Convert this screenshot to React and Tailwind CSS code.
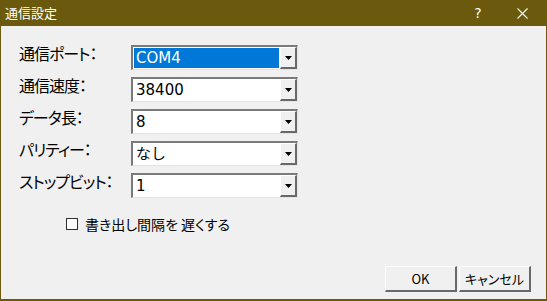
import React from 'react';

const FIELDS = [
  { label: '通信ポート：', value: 'COM4', selected: true },
  { label: '通信速度：', value: '38400' },
  { label: 'データ長：', value: '8' },
  { label: 'パリティー：', value: 'なし' },
  { label: 'ストップビット：', value: '1' },
];

const jp = { fontFamily: '"Noto Sans CJK JP", "Noto Sans", sans-serif' };

function ComboBox({ value, selected }) {
  return (
    <div className="w-[167px] h-[25px] flex border-t-2 border-l-2 border-b border-r border-t-[#7a7a7a] border-l-[#7a7a7a] border-b-[#e3e3e3] border-r-[#e3e3e3] bg-white">
      <div className="flex-1 p-[1px] flex">
        <div
          className={`flex-1 flex items-center pl-[2px] text-[15px] leading-none ${
            selected ? 'bg-[#0078d7] text-white' : 'text-black'
          }`}
          style={{ fontFamily: '"DejaVu Sans", "Noto Sans CJK JP", sans-serif' }}
        >
          {value}
        </div>
      </div>
      <div className="w-[17px] h-full flex items-center justify-center bg-[#f0f0f0] border-t border-l border-t-white border-l-white border-b-2 border-r-2 border-b-[#696969] border-r-[#696969]">
        <svg width="7" height="4" viewBox="0 0 7 4">
          <path d="M0 0h7L3.5 4z" fill="#000" />
        </svg>
      </div>
    </div>
  );
}

export default function App() {
  return (
    <div className="w-[547px] h-[301px] flex flex-col bg-[#6b5a0d] p-[1px] pt-0 select-none">
      <div className="h-[26px] flex items-center text-white text-[13px] shrink-0" style={jp}>
        <span className="pl-[4px] flex-1">通信設定</span>
        <span className="w-[20px] text-[14px] mr-[29px] text-center" style={{ fontFamily: '"DejaVu Sans", sans-serif' }}>?</span>
        <svg width="11" height="11" viewBox="0 0 11 11" className="mr-[18px]">
          <path d="M0.5 0.5l10 10M10.5 0.5l-10 10" stroke="#fff" strokeWidth="1.1" />
        </svg>
      </div>
      <div className="flex-1 bg-[#f0f0f0] mb-[1px] flex flex-col" style={jp}>
        <div className="flex flex-col gap-[7px] pt-[19px]">
          {FIELDS.map((f) => (
            <div key={f.label} className="flex items-start h-[25px]">
              <div className="w-[130px] pl-[18px] text-[16px] leading-[16px] text-black whitespace-nowrap tracking-[-1px] [font-feature-settings:'palt']">
                {f.label}
              </div>
              <ComboBox value={f.value} selected={f.selected} />
            </div>
          ))}
        </div>
        <div className="flex items-center mt-[19px] pl-[65px] gap-[7px]">
          <div className="w-[12px] h-[12px] border border-[#333] bg-white" />
          <span className="text-[14px] leading-none text-black [font-feature-settings:'palt']">書き出し間隔を 遅くする</span>
        </div>
        <div className="flex-1" />
        <div className="flex justify-end gap-[2px] pr-[15px] pb-[7px]">
          {['OK', 'キャンセル'].map((t) => (
            <button
              key={t}
              className="w-[72px] h-[26px] bg-[#f0f0f0] text-[13px] text-black border-t border-l border-t-white border-l-white border-b-2 border-r-2 border-b-[#696969] border-r-[#696969] flex items-center justify-center [font-feature-settings:'palt']"
              style={jp}
            >
              {t}
            </button>
          ))}
        </div>
      </div>
    </div>
  );
}
